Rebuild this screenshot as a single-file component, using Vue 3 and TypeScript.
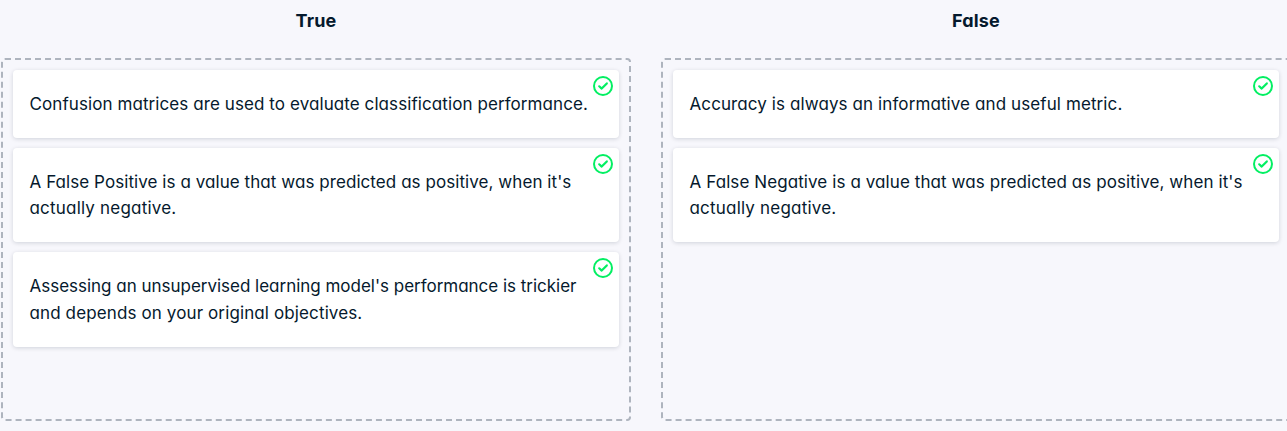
<script setup lang="ts">
interface Line { text: string; cls: string }
interface Column { title: string; cards: Line[][] }

const columns: Column[] = [
  {
    title: 'True',
    cards: [
      [{ text: 'Confusion matrices are used to evaluate classification performance.', cls: 'a' }],
      [
        { text: "A False Positive is a value that was predicted as positive, when it's", cls: 'b' },
        { text: 'actually negative.', cls: 'c' },
      ],
      [
        { text: "Assessing an unsupervised learning model's performance is trickier", cls: 'd' },
        { text: 'and depends on your original objectives.', cls: 'e' },
      ],
    ],
  },
  {
    title: 'False',
    cards: [
      [{ text: 'Accuracy is always an informative and useful metric.', cls: 'f' }],
      [
        { text: "A False Negative is a value that was predicted as positive, when it's", cls: 'g' },
        { text: 'actually negative.', cls: 'c' },
      ],
    ],
  },
]
</script>

<template>
  <main class="board">
    <section v-for="col in columns" :key="col.title" class="column">
      <h2 class="title">{{ col.title }}</h2>
      <div class="zone">
        <article v-for="(card, i) in col.cards" :key="i" class="card">
          <div v-for="line in card" :key="line.text" class="line">
            <span :class="line.cls">{{ line.text }}</span>
          </div>
          <svg class="check" viewBox="0 0 20 20" width="20" height="20" fill="none" stroke="#03ef62" stroke-width="2">
            <circle cx="10" cy="10" r="9" />
            <path d="M6.2 10.3 8.7 12.6 13.8 7.4" stroke-width="2.2" stroke-linecap="round" stroke-linejoin="round" />
          </svg>
        </article>
      </div>
    </section>
  </main>
</template>

<style>
html, body { margin: 0; overflow: hidden; background: #f7f7fc; }
</style>

<style scoped>
.board {
  box-sizing: border-box;
  width: 1292px;
  height: 431px;
  padding-left: 1px;
  display: flex;
  gap: 30px;
  background: #f7f7fc;
  color: #05192d;
  font-family: Inter, Lato, sans-serif;
  font-feature-settings: "cv11" 1;
}
.column { width: 630px; flex: none; }
.title {
  margin: 0;
  height: 58px;
  font-size: 18px;
  line-height: 42px;
  font-weight: 700;
  letter-spacing: 0.2px;
  text-align: center;
}
.zone {
  box-sizing: border-box;
  height: 363px;
  border: 2px dashed #aeb4be;
  border-radius: 4px;
  padding: 10px;
  display: flex;
  flex-direction: column;
  gap: 10px;
}
.card {
  position: relative;
  padding: 21px 16px 21px 16.5px;
  border-radius: 4px;
  background: #fff;
  box-shadow: 0 1px 4px rgba(5, 25, 45, 0.16);
}
.line {
  height: 26px;
  line-height: 26px;
  font-size: 17px;
  white-space: nowrap;
}
.card:nth-child(3) .line:nth-child(2) { height: 27px; line-height: 28px; }
.check { position: absolute; top: 6px; right: 6px; }
.a { letter-spacing: 0.085px; }
.b { letter-spacing: 0.065px; }
.c { letter-spacing: 0.2px; }
.d { letter-spacing: -0.015px; }
.e { letter-spacing: 0.12px; }
.f { letter-spacing: 0.1px; }
.g { letter-spacing: 0.09px; }
</style>
